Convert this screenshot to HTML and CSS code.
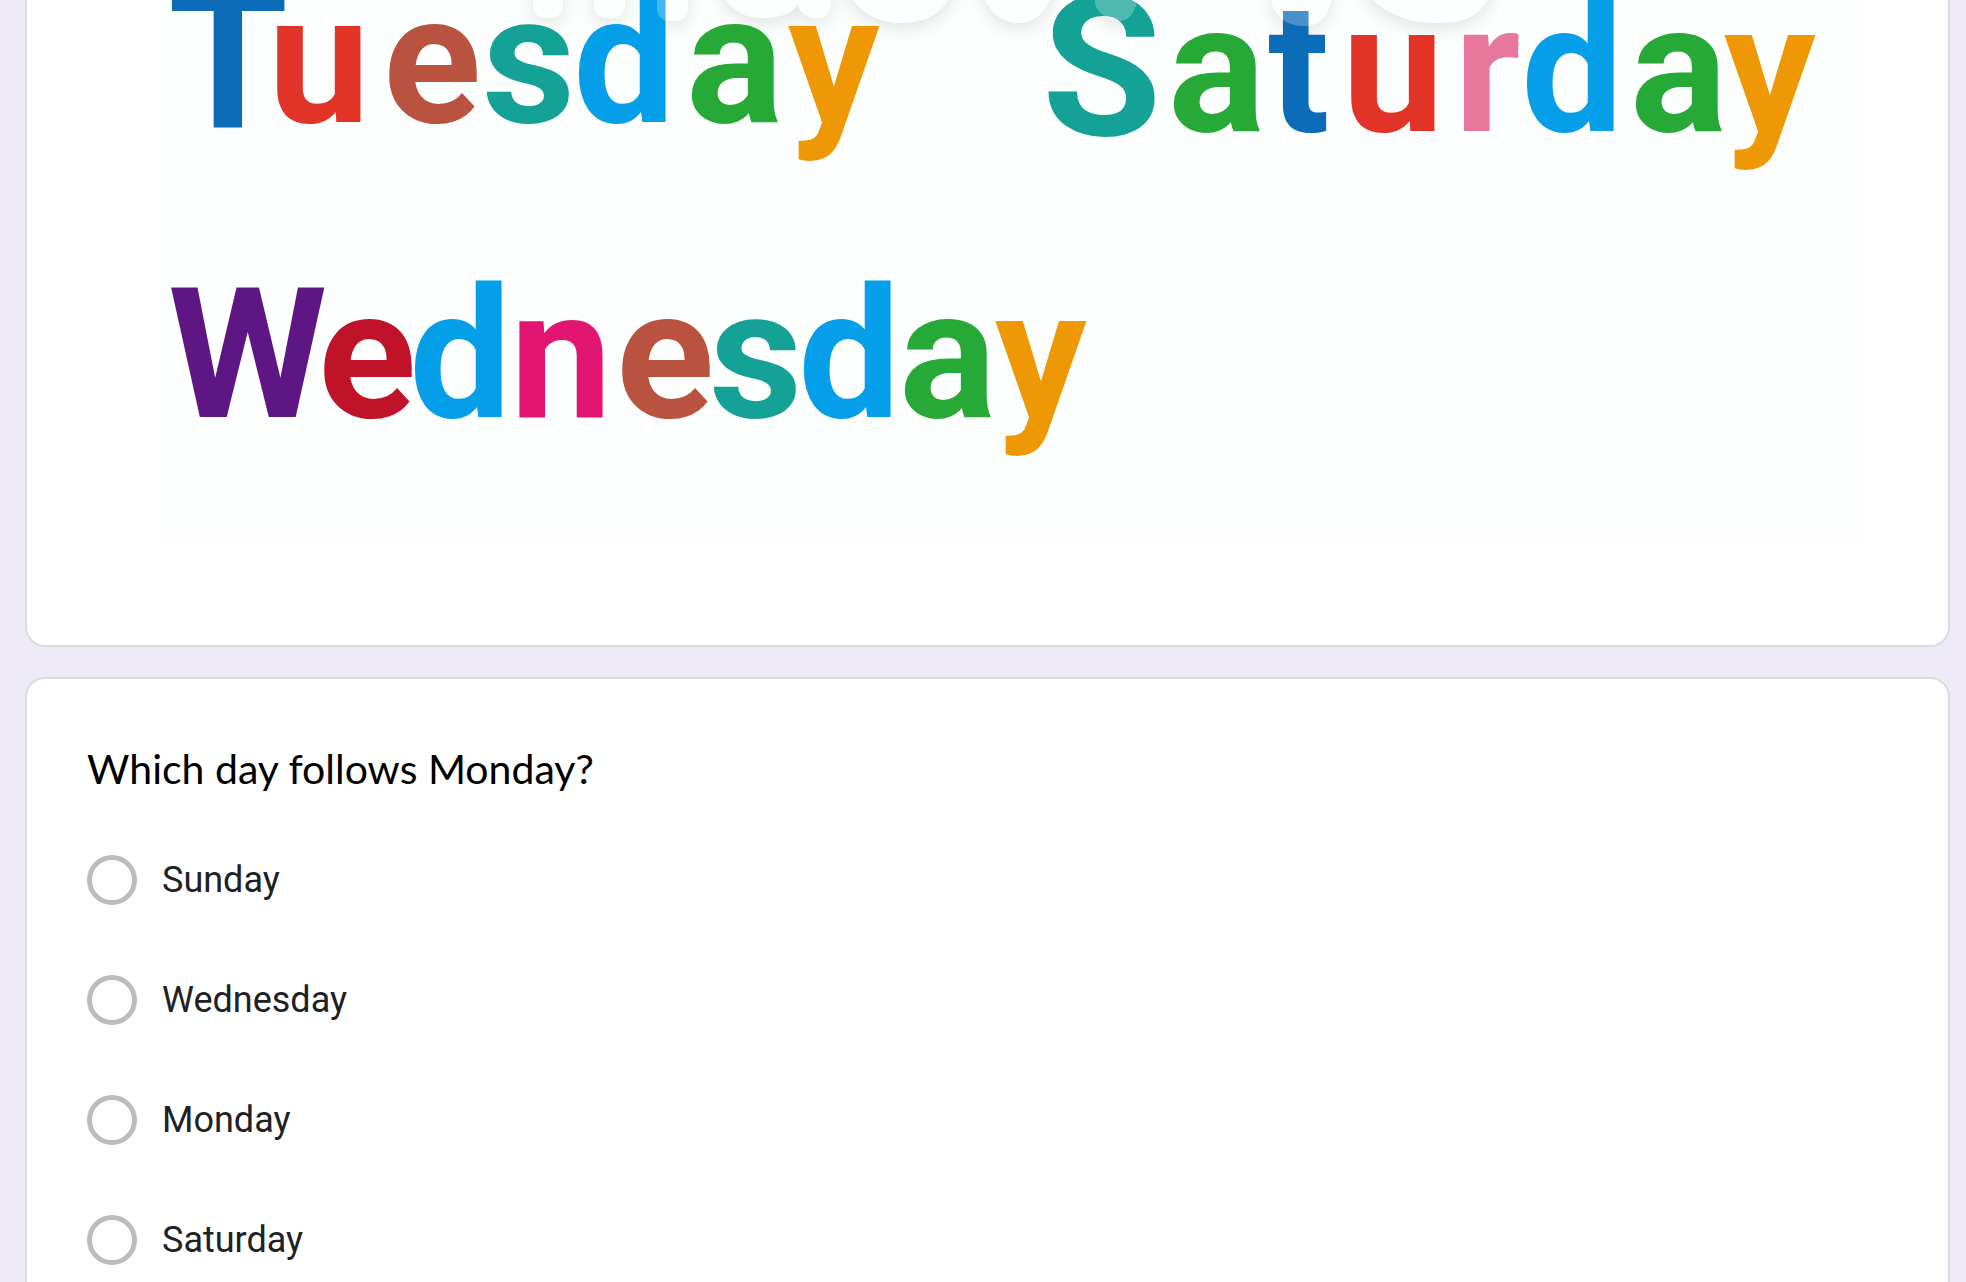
FILE: index.html
```html
<!DOCTYPE html>
<html lang="en">
<head>
<meta charset="utf-8">
<title>Days of the week</title>
<meta name="viewport" content="width=device-width, initial-scale=1">
<link rel="stylesheet" href="styles.css">
</head>
<body>
<main class="form">
  <section class="card card--picture">
    <svg class="days" viewBox="0 0 1702 540" role="img" aria-label="Days of the week">
      <defs>
        <filter id="soft" filterUnits="userSpaceOnUse" x="200" y="-80" width="1300" height="200">
          <feGaussianBlur stdDeviation="9"/>
        </filter>
        <g id="mark">
          <rect x="373" y="-60" width="30" height="78" rx="12"/>
          <rect x="434" y="-60" width="31" height="78" rx="12"/>
          <rect x="497" y="-60" width="31" height="81" rx="12"/>
          <path d="M555-30C560 5 580 18 602 18C622 18 634 12 637 5C641 14 650 20 662 18C670 16 672 8 672-30Z"/>
          <path d="M684-30C686 5 710 23 742 23C774 23 794 5 798-30Z"/>
          <path d="M818-30C820 5 838 23 858 23C878 23 892 8 898-30Z"/>
          <path d="M935-30V4C938 14 948 20 960 21C972 20 980 8 980-30Z"/>
          <path d="M1112-30V4C1116 18 1128 26 1144 26C1162 26 1174 14 1174-30Z"/>
          <path d="M1196-30C1206 4 1236 23 1276 23C1310 23 1330 14 1336-30Z"/>
        </g>
      </defs>
      <rect class="days__paper" width="1702" height="540"/>
      <use class="days__shadow" href="#mark" y="6" filter="url(#soft)"/>
      <use class="days__mark" href="#mark"/>
      <text class="days__word"><tspan class="days__capital navy" x="8" y="127">T</tspan><tspan class="red" x="108" y="122">u</tspan><tspan class="brown" x="223">e</tspan><tspan class="teal" x="322">s</tspan><tspan class="sky" x="413">d</tspan><tspan class="green" x="526">a</tspan><tspan class="orange" x="628">y</tspan></text>
      <text class="days__word"><tspan class="days__capital teal" x="882" y="135">S</tspan><tspan class="green" x="1008" y="131">a</tspan><tspan class="navy" x="1108">t</tspan><tspan class="red" x="1182">u</tspan><tspan class="pink" x="1294">r</tspan><tspan class="sky" x="1361">d</tspan><tspan class="green" x="1470">a</tspan><tspan class="orange" x="1564">y</tspan></text>
      <text class="days__word" y="417"><tspan class="purple" x="8">W</tspan><tspan class="crimson" x="158">e</tspan><tspan class="sky" x="249">d</tspan><tspan class="magenta" x="350">n</tspan><tspan class="brown" x="456">e</tspan><tspan class="teal" x="549">s</tspan><tspan class="sky" x="638">d</tspan><tspan class="green" x="739">a</tspan><tspan class="orange" x="835">y</tspan></text>
      <use class="days__glaze" href="#mark"/>
    </svg>
  </section>
  <section class="card card--question">
    <fieldset class="question">
      <legend class="question__title">Which day follows Monday?</legend>
      <label class="option"><input class="option__radio" type="radio" name="day"><span>Sunday</span></label>
      <label class="option"><input class="option__radio" type="radio" name="day"><span>Wednesday</span></label>
      <label class="option"><input class="option__radio" type="radio" name="day"><span>Monday</span></label>
      <label class="option"><input class="option__radio" type="radio" name="day"><span>Saturday</span></label>
    </fieldset>
  </section>
</main>
</body>
</html>
```
FILE: styles.css
```css
* { box-sizing: border-box; }
body { margin: 0; background: #eeeaf8; color: #202124; font-family: Roboto, sans-serif; }
.form { display: flex; flex-direction: column; gap: 30px; padding: 0 16px 0 25px; }
.card { background: #fff; border: 2px solid #dadce0; border-radius: 20px; }
.card--picture { border-top: 0; border-radius: 0 0 20px 20px; padding: 0 86px 105px 133px; }
.card--question { padding: 60px; }
.days { display: block; width: 100%; height: auto; }
.days__paper { fill: #fdfffe; }
.days__shadow { fill: #000; opacity: 0.1; }
.days__mark { fill: #fdfffe; }
.days__glaze { fill: #fff; opacity: 0.25; }
.days__word { font: bold 182px Roboto, sans-serif; }
.days__capital { font-size: 194px; }
.navy { fill: #0c6cb8; }
.red { fill: #e23329; }
.brown { fill: #b9533f; }
.teal { fill: #14a196; }
.sky { fill: #049fe8; }
.green { fill: #26a936; }
.orange { fill: #ef9806; }
.pink { fill: #e8779c; }
.purple { fill: #5e1685; }
.crimson { fill: #c01228; }
.magenta { fill: #e21672; }
.question { border: 0; margin: 0; padding: 0; min-width: 0; }
.question__title { padding: 0; margin-bottom: 21px; color: #000; font: 400 41px/60px Lato, sans-serif; }
.option { display: flex; align-items: center; gap: 25px; height: 120px; font-size: 36px; }
.option__radio { appearance: none; flex: none; width: 50px; height: 50px; margin: 0; border: 5px solid #bdbdbd; border-radius: 50%; background: #fff; }
.option__radio:checked { background: radial-gradient(#673ab7 50%, #fff 54%); border-color: #673ab7; }
```
